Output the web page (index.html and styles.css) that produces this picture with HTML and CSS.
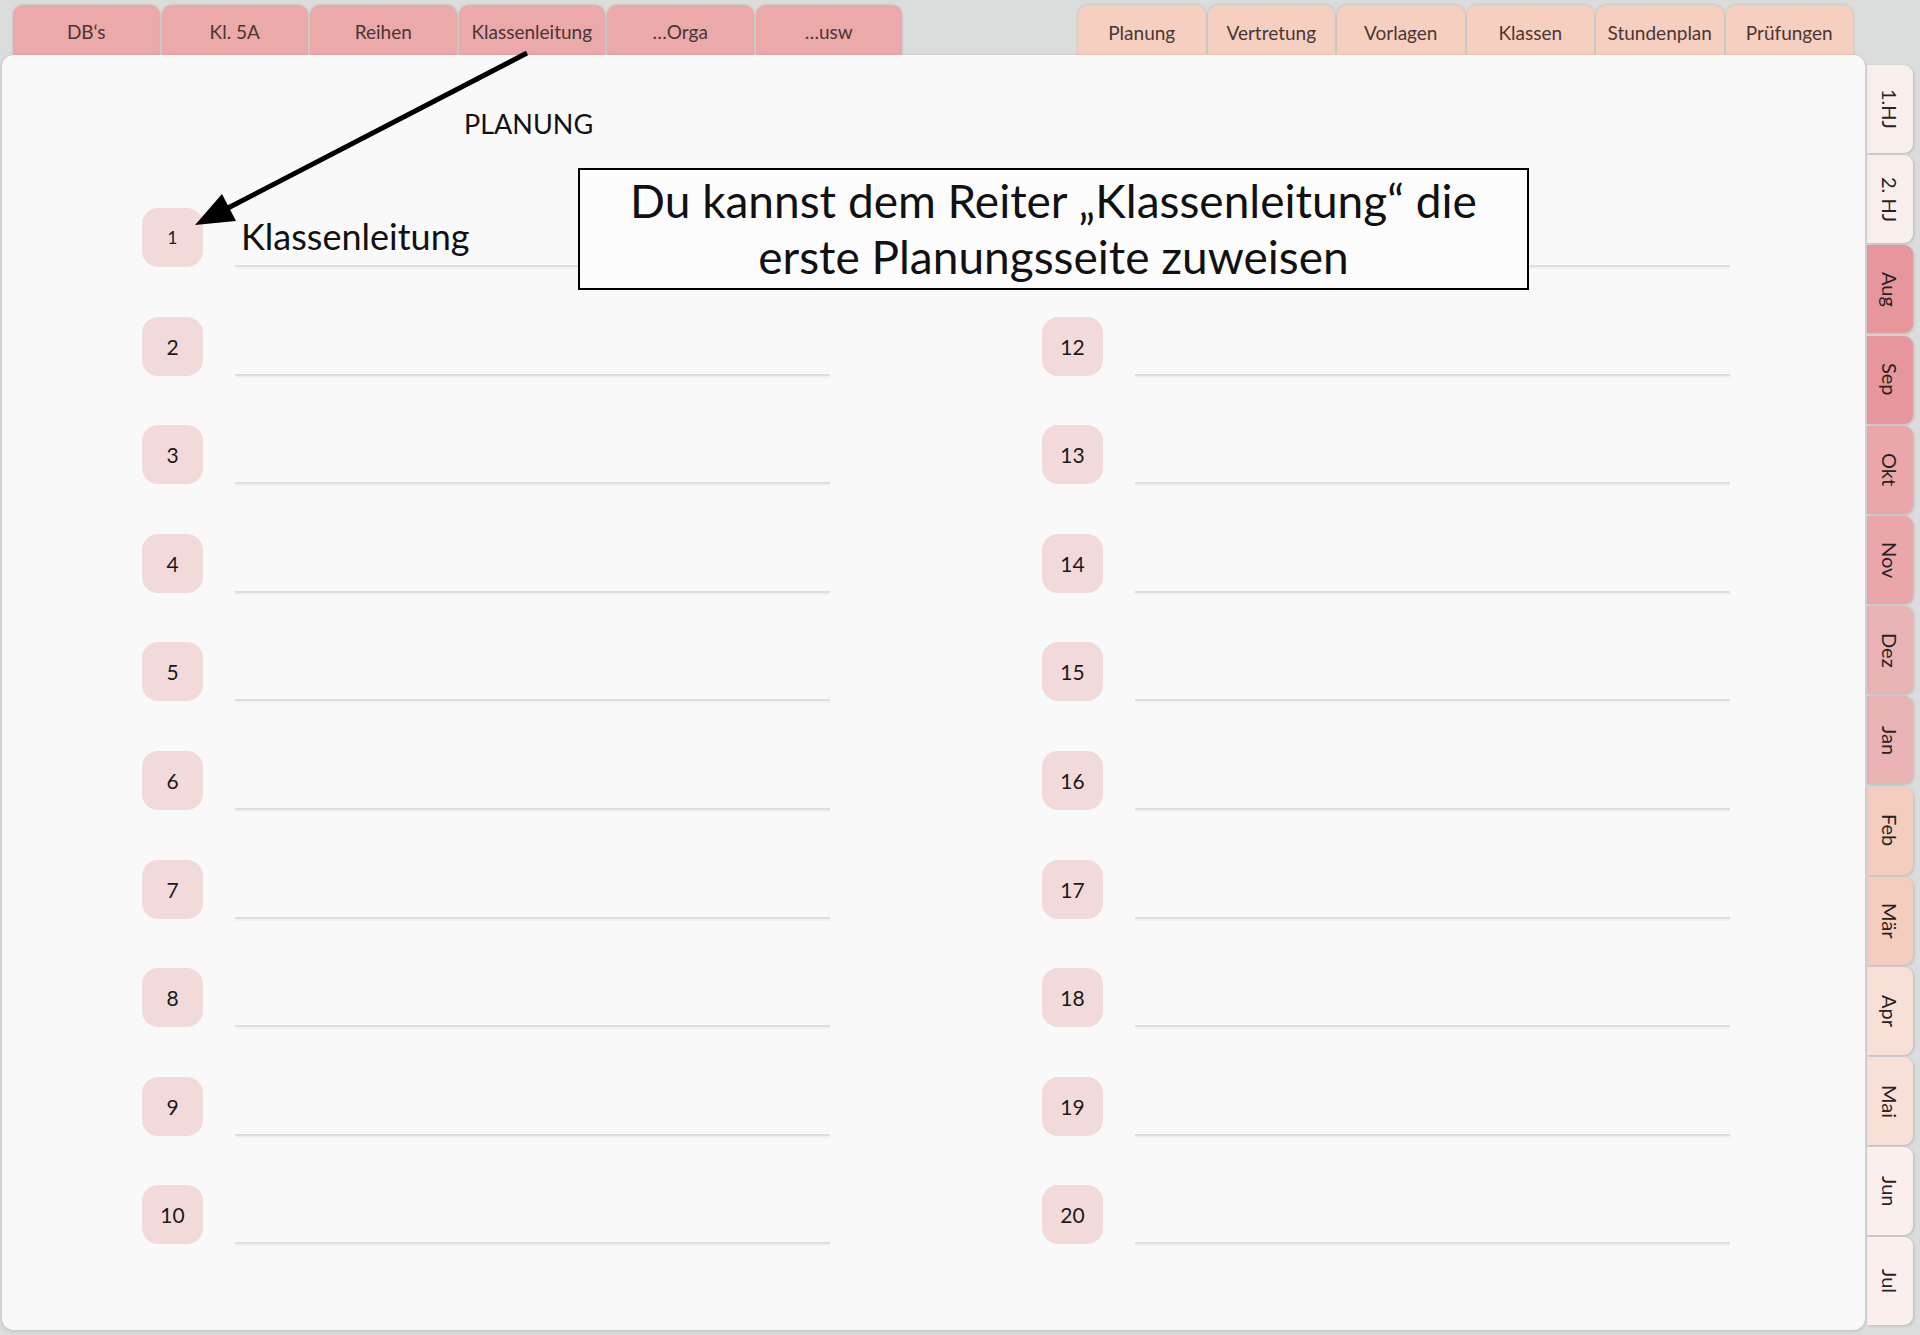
FILE: index.html
```html
<!DOCTYPE html>
<html lang="de">
<head>
    <meta charset="UTF-8">
    <title>Planung</title>
    <link rel="stylesheet" href="styles.css">
</head>
<body>
    <!-- Reiter oben -->
    <div class="top-tabs">
        <div class="tab-group group-class">
            <div class="top-tab">DB‘s</div>
            <div class="top-tab">Kl. 5A</div>
            <div class="top-tab">Reihen</div>
            <div class="top-tab">Klassenleitung</div>
            <div class="top-tab">…Orga</div>
            <div class="top-tab">…usw</div>
        </div>
        <div class="tab-group group-main">
            <div class="top-tab">Planung</div>
            <div class="top-tab">Vertretung</div>
            <div class="top-tab">Vorlagen</div>
            <div class="top-tab">Klassen</div>
            <div class="top-tab">Stundenplan</div>
            <div class="top-tab">Prüfungen</div>
        </div>
    </div>

    <div class="book">
        <div class="sheet">
            <h2 class="sheet-title">PLANUNG</h2>

            <div class="columns">
                <div class="col">
                    <div class="row"><div class="num num-small">1</div><div class="line"><span class="entry">Klassenleitung</span></div></div>
                    <div class="row"><div class="num">2</div><div class="line"></div></div>
                    <div class="row"><div class="num">3</div><div class="line"></div></div>
                    <div class="row"><div class="num">4</div><div class="line"></div></div>
                    <div class="row"><div class="num">5</div><div class="line"></div></div>
                    <div class="row"><div class="num">6</div><div class="line"></div></div>
                    <div class="row"><div class="num">7</div><div class="line"></div></div>
                    <div class="row"><div class="num">8</div><div class="line"></div></div>
                    <div class="row"><div class="num">9</div><div class="line"></div></div>
                    <div class="row"><div class="num">10</div><div class="line"></div></div>
                </div>
                <div class="col">
                    <div class="row"><div class="num">11</div><div class="line"></div></div>
                    <div class="row"><div class="num">12</div><div class="line"></div></div>
                    <div class="row"><div class="num">13</div><div class="line"></div></div>
                    <div class="row"><div class="num">14</div><div class="line"></div></div>
                    <div class="row"><div class="num">15</div><div class="line"></div></div>
                    <div class="row"><div class="num">16</div><div class="line"></div></div>
                    <div class="row"><div class="num">17</div><div class="line"></div></div>
                    <div class="row"><div class="num">18</div><div class="line"></div></div>
                    <div class="row"><div class="num">19</div><div class="line"></div></div>
                    <div class="row"><div class="num">20</div><div class="line"></div></div>
                </div>
            </div>

            <!-- Hinweis + Pfeil -->
            <div class="callout">Du kannst dem Reiter „Klassenleitung“ die<br>erste Planungsseite zuweisen</div>
            <svg class="arrow" width="600" height="200" viewBox="0 0 600 200">
                <line x1="525" y1="-2" x2="224" y2="154" stroke="#000" stroke-width="5"/>
                <polygon points="193,170 234,166 220,139" fill="#000"/>
            </svg>
        </div>

        <!-- Monatsreiter -->
        <div class="side-tabs">
            <div class="side-tab hj">1.HJ</div>
            <div class="side-tab hj">2. HJ</div>
            <div class="side-tab m1">Aug</div>
            <div class="side-tab m1">Sep</div>
            <div class="side-tab m2">Okt</div>
            <div class="side-tab m2">Nov</div>
            <div class="side-tab m3">Dez</div>
            <div class="side-tab m3">Jan</div>
            <div class="side-tab m4">Feb</div>
            <div class="side-tab m4">Mär</div>
            <div class="side-tab m5">Apr</div>
            <div class="side-tab m5">Mai</div>
            <div class="side-tab m6">Jun</div>
            <div class="side-tab m6">Jul</div>
        </div>
    </div>
</body>
</html>
```

FILE: styles.css
```css
/* General */
body {
    margin: 0;
    background-color: #dbdcdc;
    font-family: Lato, "Open Sans", sans-serif;
    color: #111;
    height: 1335px;
    overflow: hidden;
}

/* Top tabs */
.top-tabs {
    display: flex;
    height: 50px;
    padding-top: 5px;
    padding-left: 13px;
}

.tab-group {
    display: flex;
    gap: 2px;
}

.group-main {
    margin-left: 176px;
}

.top-tab {
    height: 50px;
    border-radius: 10px 10px 0 0;
    box-shadow: 0 0 3px rgba(0, 0, 0, 0.18);
    font-size: 19px;
    color: #4a3636;
    display: flex;
    align-items: center;
    justify-content: center;
    padding-top: 2px;
    box-sizing: border-box;
}

.group-class .top-tab {
    width: 146.5px;
    background-color: #eba9a9;
}

.group-main .top-tab {
    width: 127.5px;
    background-color: #f7cfc0;
    padding-top: 5px;
}

/* Book */
.book {
    display: flex;
    padding-left: 2px;
}

.sheet {
    position: relative;
    width: 1863px;
    height: 1275px;
    background-color: #f9f9fa;
    border-radius: 12px;
    box-shadow: 0 1px 4px rgba(0, 0, 0, 0.15);
    box-sizing: border-box;
    padding-left: 140px;
}

.sheet-title {
    margin: 0;
    padding: 55px 0 0 322px;
    height: 153px;
    box-sizing: border-box;
    font-size: 27px;
    font-weight: 400;
    color: #111;
    line-height: 1;
}

/* Rows */
.columns {
    display: grid;
    grid-template-columns: 688px 688px;
    column-gap: 212px;
}

.col {
    display: flex;
    flex-direction: column;
    gap: 49.6px;
}

.row {
    display: flex;
    align-items: flex-end;
    height: 59px;
}

.num {
    width: 61px;
    height: 59px;
    flex: none;
    border-radius: 16px;
    background-color: #f3dada;
    display: flex;
    align-items: center;
    justify-content: center;
    font-size: 21px;
    color: #1a1a1a;
}

.num-small {
    font-size: 17px;
}

.line {
    flex: 1;
    margin-left: 32px;
    border-bottom: 2px solid #dedede;
    box-shadow: 0 2px 0 #f1f1f1;
    display: flex;
    align-items: flex-end;
}

.entry {
    font-size: 36px;
    line-height: 1;
    padding: 0 0 11px 6px;
}

/* Callout */
.callout {
    position: absolute;
    z-index: 2;
    left: 576px;
    top: 113px;
    width: 951px;
    height: 122px;
    box-sizing: border-box;
    border: 2.5px solid #000;
    background-color: #fcfcfc;
    font-size: 46px;
    line-height: 56px;
    text-align: center;
    padding-top: 3px;
}

.arrow {
    position: absolute;
    z-index: 2;
    left: 0;
    top: 0;
    overflow: visible;
}

/* Side tabs */
.side-tabs {
    display: flex;
    flex-direction: column;
    gap: 2.2px;
    padding-top: 10px;
    margin-left: 2px;
}

.side-tab {
    width: 46px;
    height: 88px;
    border-radius: 0 9px 9px 0;
    box-shadow: 1px 1px 3px rgba(0, 0, 0, 0.15);
    writing-mode: vertical-rl;
    display: flex;
    align-items: center;
    justify-content: center;
    font-size: 20px;
    color: #2a2222;
}

.hj { background-color: #f8efec; }
.m1 { background-color: #e7979b; }
.m2 { background-color: #eba6aa; }
.m3 { background-color: #e9b3b5; }
.m4 { background-color: #f5cdbf; }
.m5 { background-color: #f8e0d9; }
.m6 { background-color: #faefec; }
```
